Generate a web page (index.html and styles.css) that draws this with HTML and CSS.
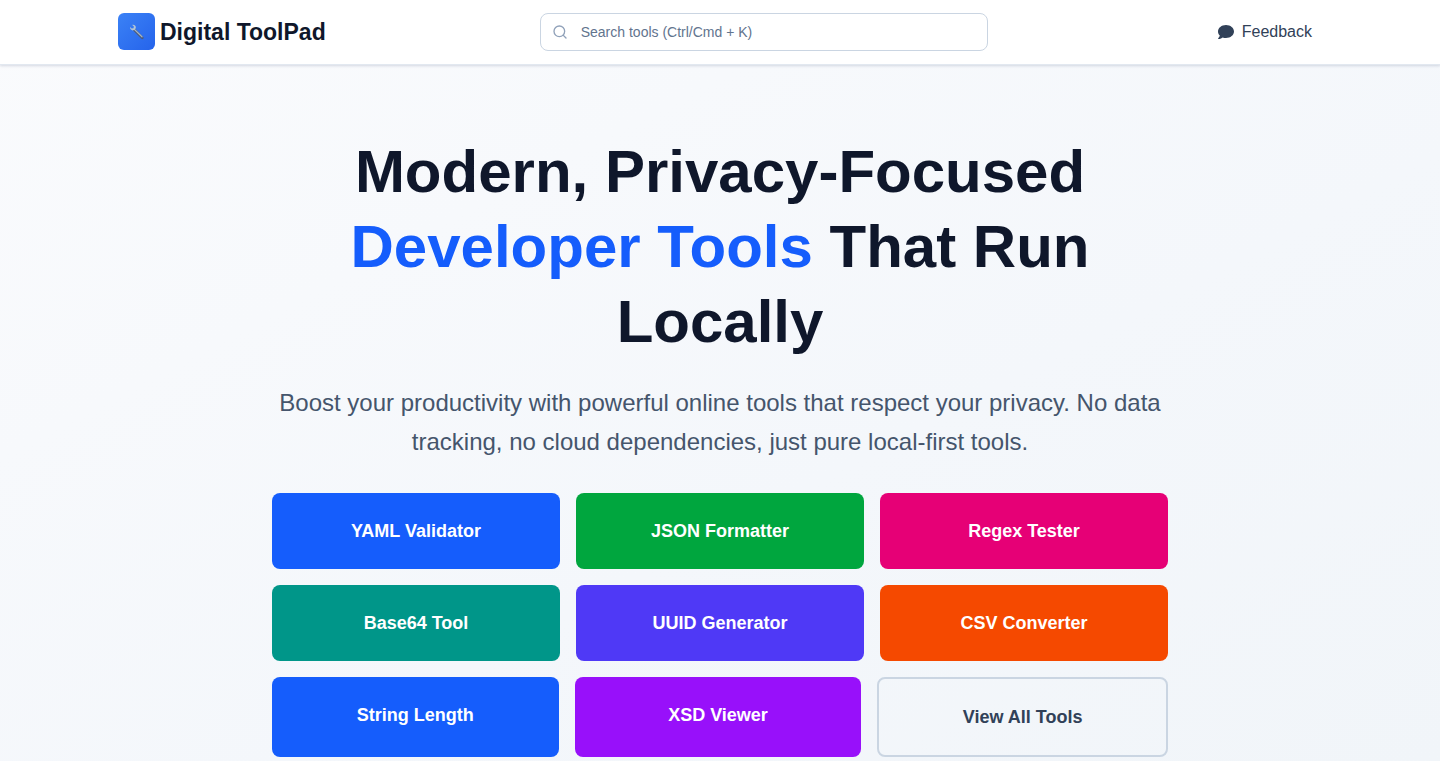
FILE: index.html
```html
<!DOCTYPE html>
<html lang="en">
<head>
    <meta charset="UTF-8">
    <meta name="viewport" content="width=device-width, initial-scale=1.0">
    <title>Digital ToolPad</title>
    <link rel="stylesheet" href="styles.css">
</head>
<body>
    <header class="header">
        <div class="header-inner">
            <a class="logo" href="#">
                <svg class="logo-icon" viewBox="0 0 48 48" aria-hidden="true">
                    <defs>
                        <linearGradient id="logoBg" x1="0" y1="0" x2="1" y2="1">
                            <stop offset="0" stop-color="#3b82f6"/>
                            <stop offset="1" stop-color="#2563eb"/>
                        </linearGradient>
                    </defs>
                    <rect x="6" y="5" width="37" height="37" rx="6" fill="url(#logoBg)"/>
                    <path d="M22 21.5L30.3 29.8" stroke="#4d5b78" stroke-width="2.6" stroke-linecap="round"/>
                    <path d="M22 21L30 28.8" stroke="#a3b5c8" stroke-width="1.2" stroke-linecap="round"/>
                    <path d="M20.2 16.9L21.9 18.5L21.5 20.2L19.7 20.6L18 19.1C17.8 21.2 19.6 22.9 21.7 22.3L23.8 20.2C24.3 18.2 22.5 16.5 20.2 16.9Z" fill="#b4c6d5"/>
                </svg>
                <span class="logo-text">Digital ToolPad</span>
            </a>
            <div class="search">
                <svg class="search-icon" viewBox="0 0 24 24" fill="none" stroke="currentColor" stroke-width="2" stroke-linecap="round" stroke-linejoin="round" aria-hidden="true">
                    <circle cx="11" cy="11" r="8"/>
                    <path d="M21 21l-4.3-4.3"/>
                </svg>
                <input class="search-input" type="text" placeholder="Search tools (Ctrl/Cmd + K)" aria-label="Search tools">
            </div>
            <button class="feedback" type="button">
                <svg class="feedback-icon" viewBox="0 0 512 512" fill="currentColor" aria-hidden="true">
                    <path d="M256 32C114.6 32 0 125.1 0 240c0 49.6 21.4 95 57 130.7C44.5 421.1 2.7 466 2.2 466.5c-2.2 2.3-2.800 5.7-1.5 8.700S4.800 480 8 480c66.300 0 116-31.800 140.600-51.400 32.700 12.300 69 19.400 107.400 19.400 141.400 0 256-93.100 256-208S397.400 32 256 32z"/>
                </svg>
                Feedback
            </button>
        </div>
    </header>

    <main class="hero">
        <h1 class="hero-title">Modern, Privacy-Focused <span class="accent">Developer Tools</span> That Run Locally</h1>
        <p class="hero-text">Boost your productivity with powerful online tools that respect your privacy. No data tracking, no cloud dependencies, just pure local-first tools.</p>
        <nav class="tools" aria-label="Tools">
            <div class="tool-row">
                <a class="tool blue" href="#">YAML Validator</a>
                <a class="tool green" href="#">JSON Formatter</a>
                <a class="tool pink" href="#">Regex Tester</a>
            </div>
            <div class="tool-row">
                <a class="tool teal" href="#">Base64 Tool</a>
                <a class="tool indigo" href="#">UUID Generator</a>
                <a class="tool orange" href="#">CSV Converter</a>
            </div>
            <div class="tool-row">
                <a class="tool blue" href="#">String Length</a>
                <a class="tool purple" href="#">XSD Viewer</a>
                <a class="tool outline" href="#">View All Tools</a>
            </div>
        </nav>
    </main>
</body>
</html>
```
FILE: styles.css
```css
* {
    box-sizing: border-box;
}
body {
    margin: 0;
    min-height: 100vh;
    font-family: "Liberation Sans", Arial, sans-serif;
    font-size: 16px;
    line-height: 24px;
    color: #0f172b;
    background: linear-gradient(to bottom right, #fafbfd, #f4f7fb 60%, #f1f5f9);
}
a {
    color: inherit;
    text-decoration: none;
}

/* header */
.header {
    position: relative;
    background: #fff;
    border-bottom: 1px solid #e2e8f0;
    box-shadow: 0 1px 3px rgba(15, 40, 80, 0.1), 0 1px 2px rgba(15, 40, 80, 0.06);
}
.header-inner {
    display: flex;
    align-items: center;
    justify-content: space-between;
    max-width: 1280px;
    margin: 0 auto;
    padding: 8px 32px;
}
.logo {
    display: flex;
    align-items: center;
}
.logo-icon {
    width: 48px;
    height: 48px;
}
.logo-text {
    font-size: 23px;
    font-weight: bold;
    line-height: 32px;
}
.search {
    position: relative;
    flex: 0 1 448px;
}
.search-icon {
    position: absolute;
    top: 11px;
    left: 12px;
    width: 16px;
    height: 16px;
    color: #90a1b9;
}
.search-input {
    display: block;
    width: 100%;
    padding: 8px 16px 8px 40px;
    border: 1px solid #cad5e2;
    border-radius: 8px;
    background: #fff;
    color: #0f172b;
    font: 14px/20px "Liberation Sans", Arial, sans-serif;
}
.search-input::placeholder {
    color: #62748e;
}
.feedback {
    display: flex;
    align-items: center;
    gap: 8px;
    padding: 8px 16px;
    border: 0;
    background: none;
    color: #314158;
    font: inherit;
    cursor: pointer;
}
.feedback-icon {
    width: 16px;
    height: 16px;
}

/* hero */
.hero {
    max-width: 928px;
    margin: 0 auto;
    padding: 69px 16px 4px;
    text-align: center;
}
.hero-title {
    margin: 0 0 24px;
    font-size: 60px;
    line-height: 75px;
}
.accent {
    color: #155dfc;
}
.hero-text {
    margin: 0 0 32px;
    font-size: 24px;
    line-height: 39px;
    color: #45556c;
}

/* tool buttons */
.tools {
    display: flex;
    flex-direction: column;
    gap: 16px;
}
.tool-row {
    display: flex;
    gap: 16px;
}
.tool {
    flex: 1;
    padding: 24px 32px;
    border-radius: 8px;
    color: #fff;
    font-size: 18px;
    font-weight: bold;
    line-height: 28px;
}
.blue { background: #155dfc; }
.green { background: #00a63e; }
.pink { background: #e60076; }
.teal { background: #009689; }
.indigo { background: #4f39f6; }
.orange { background: #f54900; }
.purple { background: #9810fa; }
.outline {
    background: none;
    border: 2px solid #cad5e2;
    color: #314158;
}
```
